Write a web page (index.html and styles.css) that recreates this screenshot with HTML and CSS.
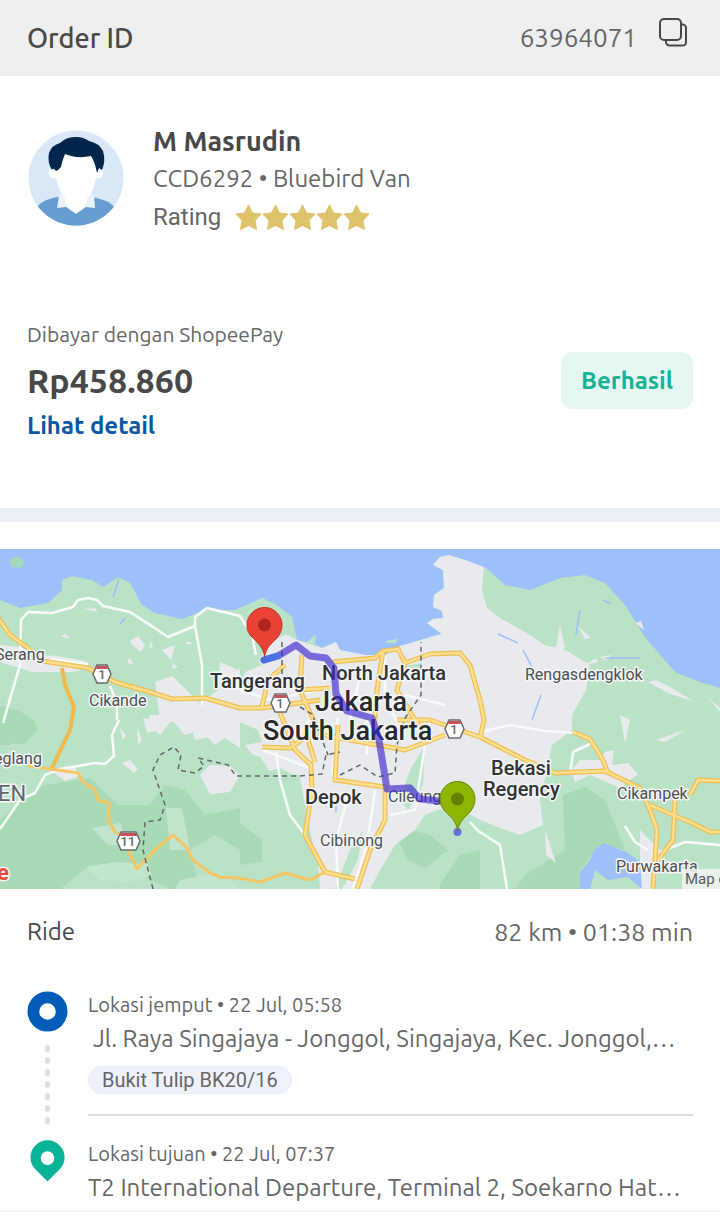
FILE: index.html
```html
<!DOCTYPE html>
<html lang="id">
<head>
<meta charset="utf-8">
<meta name="viewport" content="width=device-width, initial-scale=1">
<title>Order 63964071</title>
<link rel="stylesheet" href="styles.css">
</head>
<body>
<header class="order">
  <h1 class="order-title">Order ID</h1>
  <div class="order-value">
    <span>63964071</span>
    <button class="copy" type="button" aria-label="Copy order ID">
      <svg viewBox="0 0 30 30" width="30" height="30" fill="none" stroke="#484848" stroke-width="2">
        <rect x="2" y="2" width="21" height="21" rx="4"/>
        <path d="M23 7.500h1.500a3.500 3.500 0 0 1 3.500 3.500v14.500a3 3 0 0 1-3 3H11.500a3.500 3.500 0 0 1-3.500-3.500V23"/>
      </svg>
    </button>
  </div>
</header>

<main>
  <section class="driver">
    <svg class="avatar" viewBox="0 0 96 96" role="img" aria-label="Driver">
      <defs><clipPath id="face"><circle cx="48" cy="48" r="47.500"/></clipPath></defs>
      <g clip-path="url(#face)">
        <rect width="96" height="96" fill="#dae7f7"/>
        <path d="M8 79 Q12 70 30 67 L64 67 Q82 70 88 79 L88 96 L8 96Z" fill="#669ccf"/>
        <path d="M31 66 L38 58 H58 L66 66 L67 78 L58 77 L48 84 L38 77 L29 78Z" fill="#eaf2fc"/>
        <path d="M37 61 H59 V71 Q58 76 48 83 Q38 76 37 71Z" fill="#fff"/>
        <path d="M26 38 Q20 38 21 44 Q22 49 28 48 C31 62 37 72 48 73 C59 72 66 62 68 48 Q75 49 75 43 Q76 38 70 39 L65 22 H35Z" fill="#fff"/>
        <path d="M28 41 Q25 37 24 40 Q19 32 21 23 Q24 15 32 13 Q39 6 49 7 Q55 7 61 11 Q71 13 75 21 Q78 31 74 40 L71 38 L69 43 Q67 32 63 26 Q48 29 37 24 Q34 31 33 37 L30 40Z" fill="#00264c"/>
      </g>
    </svg>
    <div class="driver-info">
      <h2 class="driver-name">M Masrudin</h2>
      <p>CCD6292 • Bluebird Van</p>
      <p class="rating">
        <span>Rating</span>
        <svg class="stars" viewBox="0 0 135 27" role="img" aria-label="5 dari 5">
          <defs><path id="star" d="M13.500 1 L17.500 9 L26 10 L20 16.500 L21.500 25.500 L13.500 21.500 L5.500 25.500 L7 16.500 L1 10 L9.500 9Z"/></defs>
          <g fill="#dfc36a" stroke="#dfc36a" stroke-linejoin="round"><use href="#star"/><use href="#star" x="27"/><use href="#star" x="54"/><use href="#star" x="81"/><use href="#star" x="108"/></g>
        </svg>
      </p>
    </div>
  </section>

  <section class="payment">
    <div class="payment-info">
      <p class="method">Dibayar dengan ShopeePay</p>
      <p class="amount">Rp458.860</p>
      <a class="detail" href="#detail">Lihat detail</a>
    </div>
    <span class="status">Berhasil</span>
  </section>

  <div class="band"></div>

  <svg class="map" viewBox="0 549 720 340" role="img" aria-label="Peta perjalanan">
    <defs>
      <path id="toll-west" d="M-4 615 L10 635 L28 648 L42 661 L88 668 L115 682 L150 692 L172 699 L205 698 L240 708 L262 708 L320 700"/>
      <path id="city-roads" d="M262 707 L268 680 L285 665 M302 655 L300 690 L320 735 M300 690 L330 688 M275 700 L295 750 L311 765 L312 790 L305 835 L325 872 L355 879 M262 747 L290 748 L312 733 L405 750 L445 735 M315 762 L305 730 M333 662 L375 658 L383 651 L398 649 L405 663 L430 654 L460 653 L470 665 L480 700 L484 720 L480 738 M383 651 L377 690 L374 730 M405 663 L397 690 L412 715 L425 735 M338 725 L335 780 L385 787 L385 820 L370 850 L357 889 M397 720 L430 720 L480 737 L525 760 L555 773 L605 771 L640 788 L650 810 L657 830 L653 889"/>
      <path id="east-roads" d="M573 732 L590 739 L603 760 L607 771 M650 805 L690 822 L710 832 H720 M690 795 L698 780 L720 781 M675 800 L673 840 L658 860"/>
    </defs>
    <rect y="549" width="720" height="340" fill="#9dbffa"/>
    <path fill="#bae2c7" d="M0 600 L20 608 L48 603 L62 590 L62 580 L72 576 L92 580 L103 587 L118 577 L130 583 L142 605 L155 613 L182 619 L205 610 L235 610 L262 598 L275 604 L292 617 L297 640 L307 642 L316 634 L315 644 L322 648 L336 642 L340 650 L365 655 L385 655 L400 646 L436 635 L442 634 L427 623 L433 619 L443 618 L442 611 L433 607 L434 595 L444 588 L443 570 L433 565 L440 557 L448 555 L465 560 L480 566 L486 568 L505 585 L530 590 L560 578 L585 575 L605 583 L625 605 L645 637 L675 672 L700 682 L720 688 V889 H0Z"/>
    <path fill="#a4d9bb" d="M9 560 L17 556 L25 562 L21 568 L12 567Z"/>
    <g fill="#a8dab5">
      <path d="M0 820 Q20 800 45 785 L90 778 L118 805 L150 805 L165 785 L185 790 L205 815 L240 808 L240 850 L215 835 L190 850 L200 889 L170 889 L140 875 L90 865 L60 889 L0 889Z"/>
      <path d="M15 740 L25 715 L35 722 L37 730 L25 744 L12 744Z"/>
      <path d="M563 795 L585 787 L605 800 L615 825 L625 850 L600 845 L580 870 L590 889 H515 L525 875 L565 850Z"/>
      <path d="M396 835 L412 830 L430 835 L448 850 L425 868 L408 860 Z M240 828 L262 840 L262 862 L240 865Z M0 706 L20 711 L35 722 L10 745 L0 745Z"/>
      <path d="M440 884 L460 855 L480 850 V889 H440Z"/>
    </g>
    <g fill="#c2e5ce"><path d="M86 867 L115 862 L148 864 L152 875 L130 882 L100 880Z M92 828 L120 823 L130 846 L108 845Z M166 808 L182 808 L190 850 L170 850Z M180 880 L220 872 L240 889 H175Z"/></g>
    <g fill="#e8eaed">
      <path d="M433 565 L440 557 L448 555 L465 560 L484 567 L482 590 L487 608 L500 618 L525 632 L545 645 L565 650 L590 665 L586 690 L572 715 L572 730 L552 745 L547 770 L540 800 L543 825 L520 835 L500 828 L480 820 L464 811 L440 809 L425 815 L415 830 L395 845 L380 870 L370 889 H320 L318 860 L312 840 L305 805 L300 778 L280 768 L265 772 L245 745 L220 735 L195 740 L190 724 L160 720 L155 682 L172 676 L200 703 L218 690 L220 662 L238 670 L258 655 L278 630 L297 640 L322 648 L336 642 L340 650 L365 655 L385 655 L400 646 L442 634 L427 623 L433 619 L443 618 L442 611 L433 607 L434 595 L444 588 L443 570Z"/>
      <path d="M0 645 L20 647 L45 655 L85 663 L75 672 L32 672 L0 662Z M50 655 L85 661 L80 671 L60 668Z M131 640 L138 636 L145 645 L141 652 L131 644Z M162 650 L175 645 L171 660Z M150 715 H240 V748 L225 738 L215 745 L200 730 L185 735 L172 720 L160 735 L148 724Z M200 775 L210 765 L230 766 L240 775 L230 792 L210 794Z M122 763 L130 760 L138 769 L134 773Z M50 770 L75 766 L78 777 L65 781Z M143 718 L155 720 L158 730 L147 733Z"/>
      <path d="M571 771 L580 760 L600 760 L605 752 L614 750 L612 765 L628 763 L638 774 L620 788 L590 775 L575 782Z M640 830 L660 850 L655 889 H640Z M560 625 L565 648 L555 652Z M577 625 L591 638 L585 639Z M635 623 L641 621 L644 630Z M656 740 L685 730 L665 742Z M545 830 L556 863 L546 855Z M620 715 L630 720 L625 743Z M585 665 L596 658 L598 662Z M600 657 L612 655 L606 660Z M648 682 L656 680 L672 688 L693 701 L670 694Z M708 697 L720 708 V712Z M130 657 L133 664 L127 663Z M151 641 L153 647 L149 648Z M173 663 L178 667 L172 669Z M188 641 L193 644 L186 644Z M83 609 L95 608 L98 612Z M60 636 L66 634 L70 639Z M120 728 L126 735 L123 740Z M137 728 L142 739 L138 746Z"/>
    </g>
    <g fill="#bae2c7">
      <path d="M240 750 L260 757 L270 772 L300 775 L302 835 L315 870 L300 889 H240Z M410 770 L425 745 L423 785 L408 810 L400 800Z M350 850 L363 830 L358 860 L342 889 H335Z M400 667 L422 663 L416 673 L402 672Z M240 665 L252 655 L262 665 L245 672 L240 690Z M240 722 L258 730 L262 742 L240 746Z"/>
      <path d="M386 641 L398 639 L396 643 H386Z M240 610 L262 598 L275 604 L292 617 L295 632 L270 640 L256 665 L240 670Z"/>
    </g>
    <path fill="#a8dab5" d="M240 823 L262 840 L262 862 L240 865Z"/>
    <path fill="#9dbffa" d="M580 889 L580 872 L590 860 L594 850 L604 843 L628 853 L640 862 L642 889 L628 877 L608 880 L595 870 L590 889Z"/>
    <g fill="none" stroke="#9dbffa" stroke-width="1.500"><path d="M119 579 L113 597 M125 618 L120 624 M498 634 L518 643 M523 650 L532 667 M541 695 L532 720 M580 610 L576 635 M603 600 L611 604 M605 658 H640 M336 800 V812"/></g>

    <g fill="none" stroke="#f8fbf9" stroke-width="2.500" stroke-linejoin="round">
      <path d="M3 723 L20 665 L21 620 L28 612 L52 613 L73 607 L78 600 L88 598 L97 600 L103 606 L130 612 L150 625 L168 637 L195 626 L195 617 L207 608 L240 616 L252 635 L256 655"/>
      <path d="M195 626 L202 665 L202 705 M50 659 L88 664 M110 686 L117 703 V720 M0 829 L20 800 L35 793 L45 775 L60 769 L95 763 L105 764 L114 756 L112 735 L119 720"/>
      <path d="M276 752 L280 780 L290 815 L305 835 M338 889 L336 840 L347 800 M353 889 L367 845 L375 790 M338 717 L332 775 M430 717 L425 745 L415 810 L390 815 M367 720 V755 M300 680 L310 720 L295 740 M360 675 L350 720 L360 745 M385 655 V700 L405 735 M262 750 L310 768 M405 695 L445 705 M240 690 L270 700 L320 690"/>
      <path d="M484 731 L510 725 L545 731 L575 733 M590 744 L573 752 L570 775 M480 832 L500 845 L507 889 M660 852 L685 842 L720 845 M625 826 L635 842 L648 850 M470 822 L480 833"/>
    </g>

    <g fill="none" stroke="#efbf55" stroke-width="5" stroke-linejoin="round">
      <use href="#toll-west"/><use href="#city-roads"/><use href="#east-roads"/>
    </g>
    <path d="M62 668 L65 685 L74 707 L70 730 L51 770" fill="none" stroke="#f3b94d" stroke-width="4" stroke-linejoin="round"/>
    <g fill="none" stroke="#fddf8d" stroke-width="2.500" stroke-linejoin="round">
      <use href="#toll-west"/><use href="#city-roads"/><use href="#east-roads"/>
    </g>
    <path d="M25 765 L51 769 L78 773 L83 782 L95 790 L98 800 L109 803 L108 820 L115 832 L128 838 L130 855 L137 869 L155 850 L173 835 L187 848 L193 860 L210 873 L220 877 L240 878 L260 882 L285 873 L310 880 L325 872" fill="none" stroke="#f5c664" stroke-width="3" stroke-linejoin="round"/>
    <path d="M153 889 L143 850 L145 822 L160 820 L165 805 L153 770 L160 755 L174 747 L181 755 L178 770 L195 773 L204 766 L198 758 L228 765 L236 776 L300 776 L322 774 L326 755 L340 752 M282 642 V675 M300 707 L312 714 L328 755 M340 775 L360 765 L378 777 L395 773 L397 745 L405 718 L421 695 V642" fill="none" stroke="#62676b" stroke-width="1.500" stroke-dasharray="5 4"/>

    <path d="M97 665 h10 l4 9 l-4 9 h-10 l-4 -9Z M275 694 h11 l4 9 l-4 9 h-11 l-4 -9Z M449 720 h11 l4 9 l-4 9 h-11 l-4 -9Z M121 832 h15 l4 9 l-4 9 h-15 l-4 -9Z" fill="#fff" stroke="#686b70" stroke-width="1.500"/>
    <path d="M97 666 h10 l1 3 h-12Z M275 695 h11 l1 3 h-13Z M449 721 h11 l1 3 h-13Z M121 833 h15 l1 3 h-17Z" fill="#c5545a"/>
    <g class="road-number"><text x="102" y="679">1</text><text x="280" y="708">1</text><text x="454" y="734">1</text><text x="128" y="846">11</text></g>

    <g class="places">
      <text x="-5" y="660">Serang</text>
      <text x="89" y="706">Cikande</text>
      <text x="-6" y="764">eglang</text>
      <text x="-2" y="801" class="region">EN</text>
      <text x="-3" y="880" class="red">e</text>
      <text x="210" y="688" class="city">Tangerang</text>
      <text x="322" y="680" class="city">North Jakarta</text>
      <text x="315" y="711" class="metro">Jakarta</text>
      <text x="263" y="740" class="metro">South Jakarta</text>
      <text x="305" y="804" class="city">Depok</text>
      <text x="320" y="846">Cibinong</text>
      <text x="388" y="802">Cileungsi</text>
      <text x="525" y="680">Rengasdengklok</text>
      <text x="491" y="775" class="city">Bekasi</text>
      <text x="483" y="796" class="city">Regency</text>
      <text x="617" y="799">Cikampek</text>
      <text x="616" y="872">Purwakarta</text>
    </g>
    <rect x="682" y="869" width="38" height="20" fill="#f0f3f2" fill-opacity=".88"/>
    <text x="685" y="884" class="credit">Map data</text>

    <path d="M264 660 L278 656 L296 645 L310 656 L326 658 L334 668 L336 694 L347 711 L372 718 L379 740 L387 789 L410 788 L420 799 L457 803" fill="none" stroke="#3b25ce" stroke-opacity=".65" stroke-width="7" stroke-linejoin="round" stroke-linecap="round"/>
    <path d="M264 660 L277 656" stroke="#4b72e5" stroke-width="7" stroke-linecap="round"/>
    <circle cx="457.500" cy="832" r="4" fill="#6470dc"/>
    <path d="M264.500 657 C264 648 258 643 251 636 C247 631 247 628 247 625 A17.500 17.500 0 0 1 282 625 C282 630 280 634 277 638 C270 645 266 648 264.500 657Z" fill="#ea4335" stroke="#b93429"/>
    <circle cx="264.500" cy="625" r="6.500" fill="#b0261e"/>
    <path d="M457.500 831 C457 822 451 817 444 810 C441 806 440 802 440 799 A17.500 17.500 0 0 1 475 799 C475 804 473 808 470 812 C463 819 459 822 457.500 831Z" fill="#8db600" stroke="#688500"/>
    <circle cx="457.500" cy="799" r="6.500" fill="#648100"/>
  </svg>

  <section class="ride">
    <div class="ride-summary">
      <h2>Ride</h2>
      <span>82 km • 01:38 min</span>
    </div>
    <ol class="stops">
      <li class="stop">
        <div class="marker">
          <svg viewBox="0 0 42 42" width="41" height="41"><circle cx="21" cy="21" r="14.500" fill="#fff" stroke="#035db8" stroke-width="12"/></svg>
          <svg viewBox="0 0 5 84" width="5" height="84" fill="#dedfe0"><rect y="4" width="5" height="7" rx="2.500"/><rect y="16" width="5" height="7" rx="2.500"/><rect y="28" width="5" height="7" rx="2.500"/><rect y="40" width="5" height="7" rx="2.500"/><rect y="52" width="5" height="7" rx="2.500"/><rect y="64" width="5" height="7" rx="2.500"/><rect y="76" width="5" height="7" rx="2.500"/></svg>
        </div>
        <div class="stop-info pickup">
          <p class="stop-label">Lokasi jemput • 22 Jul, 05:58</p>
          <p class="address indented">Jl. Raya Singajaya - Jonggol, Singajaya, Kec. Jonggol,…</p>
          <span class="note">Bukit Tulip BK20/16</span>
        </div>
      </li>
      <li class="stop">
        <div class="marker">
          <svg viewBox="0 0 36 42" width="35" height="42"><path d="M18 42 L5 29 A17.500 17.500 0 1 1 31 29Z" fill="#08b397"/><circle cx="18" cy="18" r="7" fill="#fff"/></svg>
        </div>
        <div class="stop-info">
          <p class="stop-label">Lokasi tujuan • 22 Jul, 07:37</p>
          <p class="address">T2 International Departure, Terminal 2, Soekarno Hat…</p>
        </div>
      </li>
    </ol>
  </section>
</main>
</body>
</html>
```
FILE: styles.css
```css
* { box-sizing: border-box; }
body, h1, h2, p, ol { margin: 0; padding: 0; }
body {
  background: #fff;
  color: #666;
  font: 24px/38px Ubuntu, "Noto Sans", sans-serif;
}
svg { display: block; }

.order {
  display: flex;
  align-items: center;
  justify-content: space-between;
  padding: 0 27px;
  height: 76px;
  background: #efefef;
  font-size: 26px;
}
.order-title { color: #484848; font-size: 27px; font-weight: 500; }
.order-value { display: flex; align-items: center; gap: 17px; }
.copy { padding: 0 5px 12px 4px; border: 0; background: none; cursor: pointer; }

.driver { display: flex; align-items: flex-start; gap: 29px; padding: 46px 28px 0; }
.avatar { flex: none; width: 96px; height: 96px; margin-top: 8px; }
.driver-name { color: #484848; font-size: 27px; line-height: 38px; font-weight: 700; }
.rating { display: flex; align-items: center; gap: 14px; font-family: Roboto, sans-serif; }
.stars { width: 135px; height: 27px; }

.payment {
  display: flex;
  align-items: center;
  justify-content: space-between;
  padding: 75px 27px 59px;
}
.payment-info { line-height: 46px; }
.method { font-size: 21px; }
.amount { color: #484848; font-size: 34px; font-weight: 700; }
.detail { color: #0957a5; font-weight: 600; text-decoration: none; }
.status {
  padding: 10px 20px;
  border-radius: 12px;
  background: #e6f7f2;
  color: #16b294;
  font-size: 24px;
  line-height: 37px;
  font-weight: 600;
}
.band { height: 14px; margin-bottom: 27px; background: #eaeff5; }

.map { width: 100%; height: auto; }
.map text { font-family: Roboto, sans-serif; }
.places text {
  font-size: 16px;
  fill: #4b4f54;
  stroke: #f5f7f6;
  stroke-width: 3px;
  stroke-linejoin: round;
  paint-order: stroke;
}
.places .city { font-size: 20px; font-weight: 500; fill: #303236; }
.places .metro { font-size: 27px; font-weight: 500; fill: #28292c; }
.places .region { font-size: 22px; fill: #62676b; }
.places .red { font-size: 22px; font-weight: 700; fill: #e64a3c; }
.road-number text { font-size: 13px; font-weight: 500; text-anchor: middle; fill: #65676b; }
.map .credit { font-size: 15px; fill: #55595c; }

.ride { padding: 24px 27px 5px; border-bottom: 2px solid #f5f5f5; }
.ride-summary { display: flex; justify-content: space-between; font-size: 25px; }
.ride-summary h2 { color: #484848; font-size: 24px; font-weight: 400; }
.stops { display: flex; flex-direction: column; margin-top: 35px; list-style: none; }
.stop { display: flex; gap: 20px; min-width: 0; }
.marker { display: flex; flex: 0 0 41px; flex-direction: column; align-items: center; gap: 9px; padding-top: 5px; }
.stop-info { flex: 1; min-width: 0; line-height: 34px; }
.pickup { margin-bottom: 19px; padding-bottom: 20px; border-bottom: 2px solid #dedede; }
.stop-label { padding-top: 2px; font-size: 20px; }
.address { overflow: hidden; white-space: nowrap; }
.indented { padding-left: 5px; }
.note {
  display: block;
  width: fit-content;
  margin-top: 10px;
  padding: 0 13px;
  border: 1px solid #e6ebf6;
  border-radius: 14px;
  background: #f0f2fb;
  font-family: Roboto, sans-serif;
  font-size: 20px;
  line-height: 26px;
}
```
